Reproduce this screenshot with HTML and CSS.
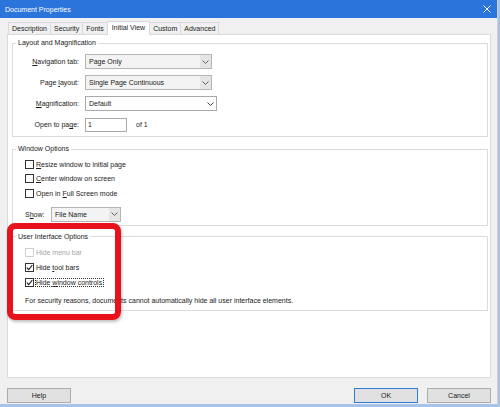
FILE: index.html
```html
<!DOCTYPE html>
<html>
<head>
<meta charset="utf-8">
<link rel="stylesheet" href="styles.css">
</head>
<body>
<div class="window">
  <div class="titlebar">
    <span class="title">Document Properties</span>
    <svg class="close" width="8" height="8" viewBox="0 0 8 8"><path d="M0.5 0.5 L7.5 7.5 M7.5 0.5 L0.5 7.5" stroke="#fff" stroke-width="1"/></svg>
  </div>
  <div class="dialog">
    <div class="tabs">
      <div class="tab">Description</div>
      <div class="tab">Security</div>
      <div class="tab">Fonts</div>
      <div class="tab active">Initial View</div>
      <div class="tab">Custom</div>
      <div class="tab">Advanced</div>
    </div>
    <div class="panel">
      <fieldset class="group g-layout">
        <legend>Layout and Magnification</legend>
        <div class="form-grid">
          <span class="lbl"><u>N</u>avigation tab:</span>
          <div class="combo gray w-nav"><span class="val">Page Only</span><span class="arrow"><svg width="7" height="4" viewBox="0 0 7 4"><polyline points="0.5,0.5 3.5,3.5 6.5,0.5" fill="none" stroke="#606060" stroke-width="1"/></svg></span></div>
          <span class="lbl">Page <u>l</u>ayout:</span>
          <div class="combo gray w-nav"><span class="val">Single Page Continuous</span><span class="arrow"><svg width="7" height="4" viewBox="0 0 7 4"><polyline points="0.5,0.5 3.5,3.5 6.5,0.5" fill="none" stroke="#606060" stroke-width="1"/></svg></span></div>
          <span class="lbl"><u>M</u>agnification:</span>
          <div class="combo white w-mag"><span class="val">Default</span><span class="arrow"><svg width="7" height="4" viewBox="0 0 7 4"><polyline points="0.5,0.5 3.5,3.5 6.5,0.5" fill="none" stroke="#404040" stroke-width="1"/></svg></span></div>
          <span class="lbl">Open to pa<u>g</u>e:</span>
          <div class="page-row"><div class="textbox">1</div><span class="of">of 1</span></div>
        </div>
      </fieldset>

      <fieldset class="group g-window">
        <legend>Window Options</legend>
        <div class="checks">
          <div class="check"><span class="box"></span><span><u>R</u>esize window to initial page</span></div>
          <div class="check"><span class="box"></span><span><u>C</u>enter window on screen</span></div>
          <div class="check"><span class="box"></span><span>Open in <u>F</u>ull Screen mode</span></div>
        </div>
        <div class="show-row">
          <span class="show-lbl">S<u>h</u>ow:</span>
          <div class="combo gray w-show"><span class="val">File Name</span><span class="arrow"><svg width="7" height="4" viewBox="0 0 7 4"><polyline points="0.5,0.5 3.5,3.5 6.5,0.5" fill="none" stroke="#606060" stroke-width="1"/></svg></span></div>
        </div>
      </fieldset>

      <fieldset class="group g-ui">
        <legend>User Interface Options</legend>
        <div class="checks ui">
          <div class="check disabled"><span class="box"></span><span>Hide menu bar</span></div>
          <div class="check"><span class="box"><svg width="7" height="7" viewBox="0 0 7 7"><polyline points="0.8,3.6 2.7,5.6 6.3,1" fill="none" stroke="#1a1a1a" stroke-width="1.1"/></svg></span><span>Hide <u>t</u>ool bars</span></div>
          <div class="check"><span class="box"><svg width="7" height="7" viewBox="0 0 7 7"><polyline points="0.8,3.6 2.7,5.6 6.3,1" fill="none" stroke="#1a1a1a" stroke-width="1.1"/></svg></span><span class="focus">Hide <u>w</u>indow controls</span></div>
        </div>
        <p class="note">For security reasons, documents cannot automatically hide all user interface elements.</p>
      </fieldset>
    </div>
    <div class="buttons">
      <div class="btn">Help</div>
      <div class="spacer"></div>
      <div class="btn default">OK</div>
      <div class="btn">Cancel</div>
    </div>
  </div>
  <div class="highlight"></div>
</div>
</body>
</html>
```

FILE: styles.css
```css
* { box-sizing: border-box; }
html, body { margin: 0; padding: 0; }
body {
  width: 500px;
  height: 407px;
  background: #a9c3e8;
  font-family: "Liberation Sans", Arial, sans-serif;
  font-size: 7px;
  color: #1a1a1a;
  overflow: hidden;
}
.window {
  position: relative;
  width: 498px;
  height: 404px;
  background: #f0f0f0;
  border-right: 1px solid #d0d0d0;
}
.titlebar {
  height: 18px;
  background: #2b74dc;
  color: #fff;
  display: flex;
  align-items: center;
  padding: 0 6px 0 5px;
}
.title { flex: 1; font-size: 7px; }
.close { display: block; margin-right: 0; }
.dialog { padding: 0 6px 0 7px; }
.tabs {
  display: flex;
  height: 16px;
  align-items: flex-end;
  padding-left: 1px;
}
.tab {
  height: 12px;
  line-height: 11px;
  padding: 0 3px;
  border: 1px solid #d9d9d9;
  border-bottom: none;
  border-left: none;
  background: #f0f0f0;
}
.tab:first-child { border-left: 1px solid #d9d9d9; }
.tab.active {
  height: 14px;
  line-height: 12px;
  background: #fff;
  border-left: 1px solid #d9d9d9;
  position: relative;
  top: 1px;
  margin-left: -1px;
  padding: 0 4px;
}
.panel {
  height: 344px;
  background: #fff;
  border: 1px solid #d9d9d9;
  padding: 3px 2px 0 4px;
}
.group {
  margin: 0;
  padding: 0;
  border: 1px solid #dcdcdc;
  min-width: 0;
}
.group legend {
  line-height: 10px;
  padding: 0 2px;
  margin-left: 3px;
}
.g-window { margin-top: 7px; }
.g-ui { margin-top: 6px; }

.form-grid {
  display: grid;
  grid-template-columns: 66px auto;
  column-gap: 6px;
  row-gap: 6px;
  grid-auto-rows: 15px;
  padding: 6px 0 4px 0;
  align-items: center;
  justify-items: start;
}
.lbl { justify-self: end; }
.combo {
  height: 15px;
  display: flex;
  align-items: center;
  border: 1px solid #b5b5b5;
}
.combo .val { flex: 1; padding-left: 3px; }
.combo .arrow {
  width: 11px;
  height: 100%;
  display: flex;
  align-items: center;
  justify-content: center;
}
.combo.gray { background: #f3f3f3; }
.combo.gray .arrow { background: #e5e5e5; }
.combo.white { background: #fff; border-color: #a9a9a9; }
.w-nav { width: 127px; }
.w-mag { width: 132px; }
.w-show { width: 70px; }
.page-row { display: flex; align-items: center; }
.textbox {
  width: 42px;
  height: 14px;
  border: 1px solid #a9a9a9;
  line-height: 12px;
  padding-left: 2px;
}
.of { margin-left: 9px; }

.checks { padding: 3px 0 0 12px; }
.check {
  height: 14.5px;
  display: flex;
  align-items: center;
  gap: 2px;
}
.checks.ui { padding-top: 3px; }
.checks.ui .check { height: 15px; }
.box {
  width: 9px;
  height: 9px;
  border: 1px solid #333;
  background: #fff;
  display: flex;
  align-items: center;
  justify-content: center;
}
.check.disabled { color: #a6a6a6; }
.check.disabled .box { border-color: #cfcfcf; }
.focus { outline: 1px dotted #333; outline-offset: 0; padding: 0 1px 0 0; }
.show-row {
  display: flex;
  align-items: center;
  padding: 6px 0 3px 12px;
}
.show-lbl { width: 26px; }
.note { margin: 6px 0 4px 12px; line-height: 10px; }

.buttons {
  display: flex;
  gap: 9px;
  margin-top: 10px;
}
.spacer { flex: 1; }
.btn {
  width: 64px;
  height: 15px;
  border: 1px solid #adadad;
  background: #e1e1e1;
  text-align: center;
  line-height: 13px;
}
.btn.default { border-color: #2c7fd6; }
.highlight {
  position: absolute;
  left: 7px;
  top: 223px;
  width: 114px;
  height: 97px;
  border: 6px solid #e8121c;
  border-radius: 8px;
  box-shadow: 1px 2px 3px rgba(0,0,0,0.25);
}
```
